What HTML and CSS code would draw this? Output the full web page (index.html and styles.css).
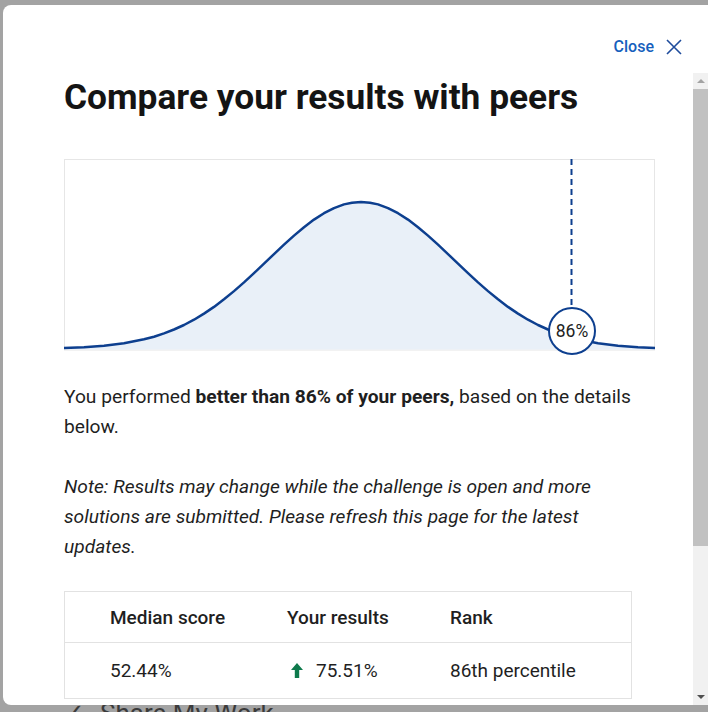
FILE: index.html
```html
<!DOCTYPE html>
<html lang="en">
<head>
<meta charset="utf-8">
<title>Compare your results with peers</title>
<link rel="stylesheet" href="styles.css">
</head>
<body>
<div class="modal">
  <div class="modal-head">
    <a class="close" href="#">Close
      <svg class="close-x" width="16" height="16" viewBox="0 0 16 16"><path d="M1 1L15 15M15 1L1 15" stroke="#1f4c9c" stroke-width="1.6" fill="none"/></svg>
    </a>
  </div>
  <div class="modal-body">
    <div class="content">
      <h1 class="title">Compare your results with peers</h1>
      <svg class="chart" width="591" height="192" viewBox="0 0 591 192">
        <rect x="0.5" y="0.5" width="590" height="190.5" fill="none" stroke="#e6e6e6" stroke-width="1"/>
        <polygon fill="#e9f0f8" points="0,189.1 20,188.3 40,186.8 60,184.3 80,180.3 90,177.7 100,174.4 110,170.5 120,166 130,160.7 140,154.6 150,147.9 160,140.3 170,132.1 180,123.4 190,114.2 200,104.7 210,95.1 220,85.7 230,76.6 240,68.2 250,60.6 260,54.2 270,49.1 280,45.4 288,43.7 297,43 306,43.7 314,45.4 324,49.1 334,54.2 344,60.6 354,68.2 364,76.6 374,85.7 384,95.1 394,104.7 404,114.2 414,123.4 424,132.1 434,140.3 444,147.9 454,154.6 464,160.7 474,166 484,170.5 494,174.4 504,177.7 514,180.3 534,184.3 554,186.8 574,188.3 591,189 591,190.5 0,190.5"/>
        <polyline fill="none" stroke="#0d3f8f" stroke-width="2.5" stroke-linejoin="round" points="0,189.1 20,188.3 40,186.8 60,184.3 80,180.3 90,177.7 100,174.4 110,170.5 120,166 130,160.7 140,154.6 150,147.9 160,140.3 170,132.1 180,123.4 190,114.2 200,104.7 210,95.1 220,85.7 230,76.6 240,68.2 250,60.6 260,54.2 270,49.1 280,45.4 288,43.7 297,43 306,43.7 314,45.4 324,49.1 334,54.2 344,60.6 354,68.2 364,76.6 374,85.7 384,95.1 394,104.7 404,114.2 414,123.4 424,132.1 434,140.3 444,147.9 454,154.6 464,160.7 474,166 484,170.5 494,174.4 504,177.7 514,180.3 534,184.3 554,186.8 574,188.3 591,189"/>
        <line x1="507.5" y1="0" x2="507.5" y2="149" stroke="#0d3f8f" stroke-width="2" stroke-dasharray="6 4"/>
        <circle cx="508" cy="172" r="23" fill="#fff" stroke="#0d3f8f" stroke-width="2"/>
        <text x="508" y="178" text-anchor="middle" class="chart-label">86%</text>
      </svg>
      <p class="summary">You performed <strong>better than 86% of your peers,</strong> based on the details below.</p>
      <p class="note">Note: Results may change while the challenge is open and more solutions are submitted. Please refresh this page for the latest updates.</p>
      <div class="results">
        <div class="results-row head">
          <span>Median score</span>
          <span>Your results</span>
          <span>Rank</span>
        </div>
        <div class="results-row">
          <span>52.44%</span>
          <span class="up"><svg width="12" height="15" viewBox="0 0 12 15"><path d="M6 0L12 7H8.2V15H3.8V7H0Z" fill="#0e7a4c"/></svg>75.51%</span>
          <span>86th percentile</span>
        </div>
      </div>
    </div>
    <div class="scrollbar">
      <div class="arrow up-arrow"></div>
      <div class="thumb"></div>
      <div class="track-rest"></div>
      <div class="arrow down-arrow"></div>
    </div>
  </div>
</div>
<div class="behind">
  <span class="check">✓</span><span class="behind-text">Share My Work</span>
</div>
</body>
</html>
```

FILE: styles.css
```css
html, body {
  margin: 0;
  padding: 0;
}
body {
  width: 708px;
  height: 712px;
  overflow: hidden;
  background: #a3a3a3;
  font-family: "Roboto", "Liberation Sans", sans-serif;
  color: #1f1f1f;
}
.modal {
  margin: 5px 0 0 3px;
  height: 700px;
  background: #fff;
  border-radius: 8px 0 0 8px;
  display: flex;
  flex-direction: column;
  overflow: hidden;
}
.modal-head {
  height: 68px;
  flex: none;
  display: flex;
  justify-content: flex-end;
  align-items: flex-start;
  padding-right: 26px;
  box-sizing: border-box;
  padding-top: 32px;
}
.close {
  display: flex;
  align-items: center;
  gap: 12px;
  color: #1660bd;
  font-weight: 500;
  font-size: 16px;
  text-decoration: none;
  line-height: 20px;
}
.close-x { display: block; }
.modal-body {
  flex: 1;
  display: flex;
  min-height: 0;
}
.content {
  flex: 1;
  padding-left: 61px;
  overflow: hidden;
}
.title {
  margin: 4px 0 42px;
  font-size: 35.3px;
  line-height: 40px;
  font-weight: 700;
  color: #141414;
}
.chart {
  display: block;
  overflow: visible;
}
.chart-label {
  font-family: "Roboto", "Liberation Sans", sans-serif;
  font-size: 17.5px;
  fill: #222;
}
.summary, .note {
  font-size: 19.2px;
  line-height: 30px;
  margin: 0;
  width: 591px;
}
.summary { margin-top: 31px; }
.summary strong { font-weight: 700; }
.note { margin-top: 30px; font-style: italic; }
.results {
  margin-top: 29px;
  width: 568px;
  border: 1px solid #e2e2e2;
  box-sizing: border-box;
}
.results-row {
  display: grid;
  grid-template-columns: 177px 163px 1fr;
  padding-left: 45px;
  font-size: 19px;
  height: 55px;
  align-items: center;
}
.results-row.head {
  height: 50px;
  font-weight: 500;
  border-bottom: 1px solid #e2e2e2;
}
.up {
  display: flex;
  align-items: center;
  gap: 13px;
  padding-left: 4px;
}
.up svg { display: block; }
.scrollbar {
  width: 15px;
  flex: none;
  background: #f1f1f1;
  display: flex;
  flex-direction: column;
  align-items: center;
}
.arrow {
  width: 0;
  height: 0;
  border-left: 4px solid transparent;
  border-right: 4px solid transparent;
  flex: none;
}
.up-arrow {
  border-bottom: 4px solid #a3a3a3;
  margin: 6px 0 6px;
}
.down-arrow {
  border-top: 4px solid #505050;
  margin: 6px 0 6px;
}
.thumb {
  width: 100%;
  height: 457px;
  background: #c1c1c1;
  flex: none;
}
.track-rest { flex: 1; }
.behind {
  height: 7px;
  overflow: hidden;
  padding-left: 63px;
  display: flex;
  align-items: flex-start;
  font-size: 26px;
  line-height: 16px;
  color: #3b3b3b;
}
.check { width: 37px; }
```
